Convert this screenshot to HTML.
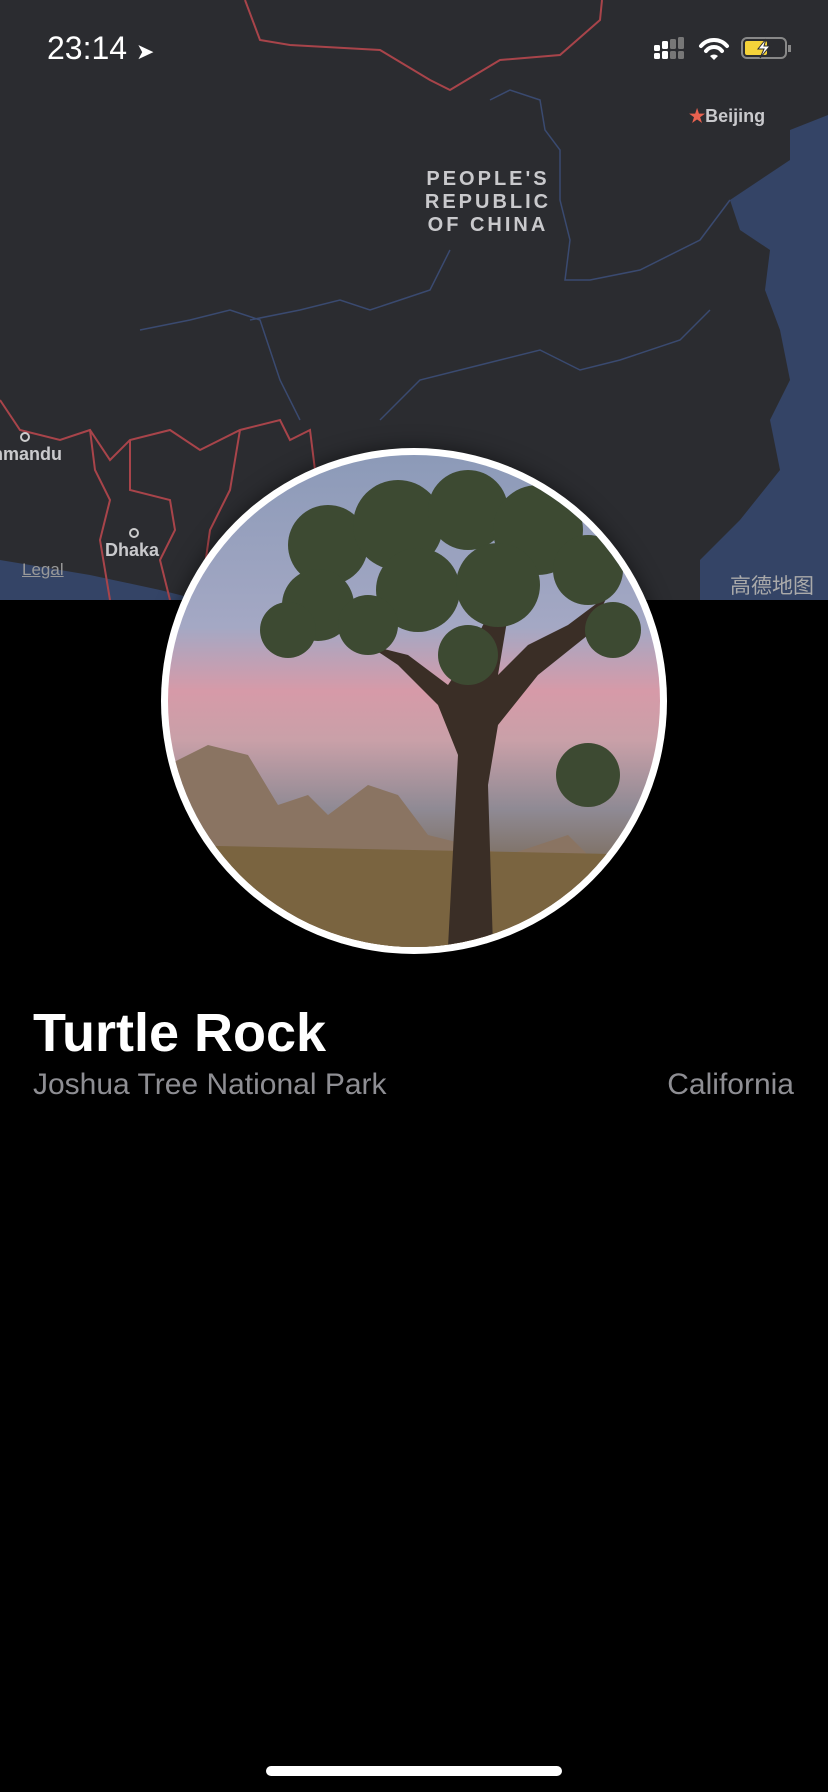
<!DOCTYPE html>
<html><head><meta charset="utf-8"><style>
*{margin:0;padding:0;box-sizing:border-box}
body{width:828px;height:1792px;background:#000;position:relative;overflow:hidden;font-family:"Liberation Sans",sans-serif}
.map{position:absolute;left:0;top:0;width:828px;height:600px;background:#2b2c30;overflow:hidden}
.t{position:absolute;color:#c9c9cc;font-weight:bold}
</style></head><body>
<div class="map">
<svg width="828" height="600" style="position:absolute;left:0;top:0">
<path d="M790 130 L828 115 L828 600 L700 600 L700 560 L740 520 L780 470 L770 420 L790 380 L780 330 L765 290 L770 250 L740 230 L730 200 L760 180 L790 160 Z" fill="#344466"/>
<path d="M0 560 L90 575 L160 590 L200 600 L0 600Z" fill="#344466"/>
<path d="M245 0 L260 40 L290 45 L380 50 L430 80 L450 90 L500 60 L560 55 L600 20 L602 0" fill="none" stroke="#a8444a" stroke-width="2"/>
<path d="M0 400 L20 430 L60 440 L90 430 L110 460 L130 440 L170 430 L200 450 L240 430 L280 420 L290 440 L310 430 L315 470 L300 520 L290 560 L280 600 M90 430 L95 470 L110 500 L100 540 L110 600 M130 440 L130 490 L170 500 L175 530 L160 560 L170 600 M240 430 L230 490 L210 530 L200 600" fill="none" stroke="#a8444a" stroke-width="2"/>
<path d="M490 100 L510 90 L540 100 L545 130 L560 150 L560 200 L570 240 L565 280 L590 280 L640 270 L700 240 L730 200" fill="none" stroke="#3a4a70" stroke-width="1.5"/>
<path d="M140 330 L190 320 L230 310 L260 320 L280 380 L300 420 M250 320 L300 310 L340 300 L370 310 L400 300 L430 290 L450 250" fill="none" stroke="#3a4a70" stroke-width="1.5"/>
<path d="M380 420 L420 380 L460 370 L500 360 L540 350 L580 370 L620 360 L680 340 L710 310" fill="none" stroke="#3a4a70" stroke-width="1.5"/>
</svg>
<div class="t" style="left:420px;top:168px;font-size:20px;letter-spacing:3px;line-height:23px;text-align:center;width:136px">PEOPLE'S<br>REPUBLIC<br>OF CHINA</div>
<div class="t" style="left:689px;top:106px;font-size:18px"><span style="color:#e8614f">★</span>Beijing</div>
<div class="t" style="left:-8px;top:444px;font-size:18px">hmandu</div>
<div style="position:absolute;left:20px;top:432px;width:10px;height:10px;border:2px solid #ccc;border-radius:50%"></div>
<div class="t" style="left:105px;top:540px;font-size:18px">Dhaka</div>
<div style="position:absolute;left:129px;top:528px;width:10px;height:10px;border:2px solid #ccc;border-radius:50%"></div>
<div style="position:absolute;left:22px;top:560px;font-size:17px;color:#999;text-decoration:underline">Legal</div>
<div style="position:absolute;left:730px;top:570px;font-size:21px;color:#aaa;font-family:'Noto Sans CJK SC',sans-serif">高德地图</div>
</div>
<div style="position:absolute;left:0;top:0;width:828px;height:90px;">
<div style="position:absolute;left:47px;top:30px;color:#fff;font-size:32px;font-weight:500">23:14 <span style="font-size:22px">➤</span></div>
<svg style="position:absolute;left:654px;top:37px" width="140" height="26">
<g fill="#fff"><rect x="0" y="8" width="6" height="6" rx="1.5"/><rect x="0" y="16" width="6" height="6" rx="1.5"/><rect x="8" y="4" width="6" height="8" rx="1.5"/><rect x="8" y="14" width="6" height="8" rx="1.5"/></g>
<g fill="#777"><rect x="16" y="2" width="6" height="10" rx="1.5"/><rect x="16" y="14" width="6" height="8" rx="1.5"/><rect x="24" y="0" width="6" height="12" rx="1.5"/><rect x="24" y="14" width="6" height="8" rx="1.5"/></g>
<path d="M47 9 A17 17 0 0 1 73 9" stroke="#fff" stroke-width="4" fill="none" stroke-linecap="round"/>
<path d="M52 14 A10 10 0 0 1 68 14" stroke="#fff" stroke-width="4" fill="none" stroke-linecap="round"/>
<path d="M56 19 L60 23 L64 19 A6 6 0 0 0 56 19Z" fill="#fff"/>
<rect x="88" y="1" width="44" height="20" rx="5" fill="none" stroke="#888" stroke-width="2"/>
<rect x="91" y="4" width="22" height="14" rx="2" fill="#f5d33a"/>
<path d="M112 2 L104 12 L110 12 L106 21 L116 9 L110 9 Z" fill="#fff" stroke="#2b2c30" stroke-width="1"/>
<rect x="134" y="8" width="3" height="7" fill="#888"/>
</svg>
</div>
<div style="position:absolute;left:161px;top:448px;width:506px;height:506px;border-radius:50%;background:#fff;box-shadow:0 0 20px rgba(0,0,0,.5)"></div>
<div style="position:absolute;left:168px;top:455px;width:492px;height:492px;border-radius:50%;overflow:hidden;background:linear-gradient(#8c9ab8 0%,#a4a8c4 35%,#d69aa8 48%,#c9a0a8 58%,#8f8a94 72%,#7a6a58 85%,#8a7048 100%)">
<svg width="492" height="492" style="position:absolute;left:0;top:0">
<path d="M0 310 L40 290 L80 300 L110 350 L140 340 L160 360 L200 330 L230 340 L260 380 L300 390 L340 400 L400 380 L440 420 L492 400 L492 492 L0 492Z" fill="#8a7462"/>
<path d="M0 390 L492 400 L492 492 L0 492Z" fill="#7a6440"/>
<path d="M280 492 L290 300 L270 250 L230 210 L200 190 L240 200 L280 230 L300 200 L320 160 L310 120 L340 160 L330 220 L360 190 L400 170 L440 140 L420 180 L370 220 L330 270 L320 330 L325 492Z" fill="#3a2e26"/>
<g fill="#3d4a32">
<circle cx="160" cy="90" r="40"/><circle cx="230" cy="70" r="45"/><circle cx="300" cy="55" r="40"/><circle cx="370" cy="75" r="45"/><circle cx="420" cy="115" r="35"/><circle cx="150" cy="150" r="36"/><circle cx="250" cy="135" r="42"/><circle cx="330" cy="130" r="42"/><circle cx="120" cy="175" r="28"/><circle cx="445" cy="175" r="28"/><circle cx="300" cy="200" r="30"/><circle cx="420" cy="320" r="32"/><circle cx="200" cy="170" r="30"/>
</g>
</svg>
</div>
<div style="position:absolute;left:33px;top:1002px;color:#fff;font-size:54px;font-weight:bold;letter-spacing:0px">Turtle Rock</div>
<div style="position:absolute;left:33px;top:1068px;color:#8e8e93;font-size:30px">Joshua Tree National Park</div>
<div style="position:absolute;right:34px;top:1068px;color:#8e8e93;font-size:30px">California</div>
<div style="position:absolute;left:266px;top:1766px;width:296px;height:10px;border-radius:5px;background:#fff"></div>
</body></html>
